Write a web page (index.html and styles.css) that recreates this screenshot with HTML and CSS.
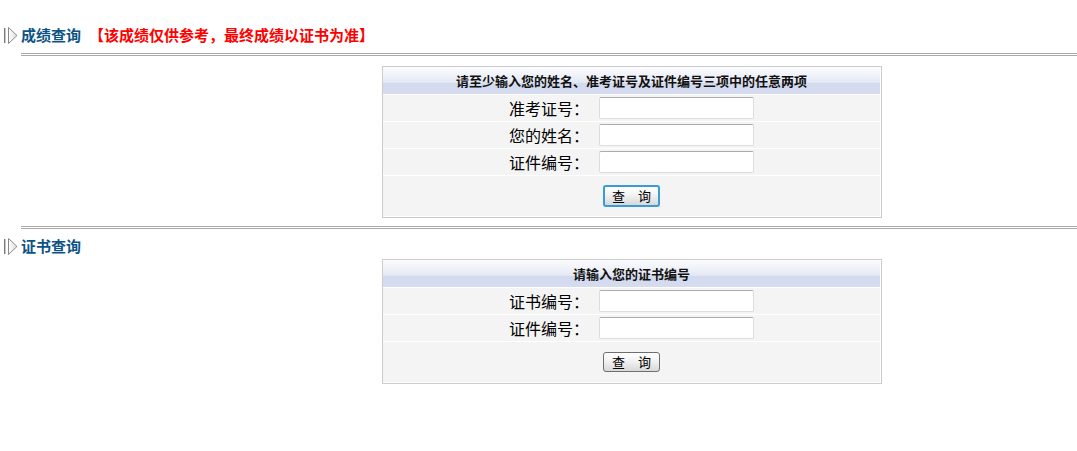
FILE: index.html
```html
<!DOCTYPE html>
<html lang="zh-CN">
<head>
<meta charset="utf-8">
<title>成绩查询</title>
<link rel="stylesheet" href="styles.css">
</head>
<body>
<div class="page">
  <div class="title first">
    <svg class="icon" width="14" height="17" viewBox="0 0 14 17">
      <defs>
        <linearGradient id="tg" x1="0" y1="0" x2="1" y2="0">
          <stop offset="0" stop-color="#ffffff"/>
          <stop offset="1" stop-color="#dcdcdc"/>
        </linearGradient>
      </defs>
      <rect x="0" y="1" width="1" height="15" fill="#7a7a7a"/>
      <rect x="1" y="1" width="1" height="15" fill="#c8c8c8"/>
      <polygon points="4.5,0.5 13,8.5 4.5,16.5" fill="url(#tg)" stroke="#888888" stroke-width="1"/>
    </svg>
    <span class="title-text">成绩查询</span>
    <span class="notice">【该成绩仅供参考，最终成绩以证书为准】</span>
  </div>
  <div class="rule first-rule"></div>

  <div class="box box-one">
    <div class="box-head">请至少输入您的姓名、准考证号及证件编号三项中的任意两项</div>
    <div class="row"><label class="lbl">准考证号：</label><input class="field" type="text"></div>
    <div class="row"><label class="lbl">您的姓名：</label><input class="field" type="text"></div>
    <div class="row"><label class="lbl">证件编号：</label><input class="field" type="text"></div>
    <div class="btn-row"><button class="btn focused" type="button">查　询</button></div>
  </div>

  <div class="rule second-rule"></div>
  <div class="title second">
    <svg class="icon" width="14" height="17" viewBox="0 0 14 17">
      <defs>
        <linearGradient id="tg2" x1="0" y1="0" x2="1" y2="0">
          <stop offset="0" stop-color="#ffffff"/>
          <stop offset="1" stop-color="#dcdcdc"/>
        </linearGradient>
      </defs>
      <rect x="0" y="1" width="1" height="15" fill="#7a7a7a"/>
      <rect x="1" y="1" width="1" height="15" fill="#c8c8c8"/>
      <polygon points="4.5,0.5 13,8.5 4.5,16.5" fill="url(#tg2)" stroke="#888888" stroke-width="1"/>
    </svg>
    <span class="title-text">证书查询</span>
  </div>

  <div class="box box-two">
    <div class="box-head">请输入您的证书编号</div>
    <div class="row"><label class="lbl">证书编号：</label><input class="field" type="text"></div>
    <div class="row"><label class="lbl">证件编号：</label><input class="field" type="text"></div>
    <div class="btn-row"><button class="btn" type="button">查　询</button></div>
  </div>
</div>
</body>
</html>
```
FILE: styles.css
```css
html, body {
  margin: 0;
  padding: 0;
  background: #ffffff;
}

body {
  font-family: "Noto Sans CJK SC", "Liberation Sans", sans-serif;
  color: #000;
}

.page {
  width: 1077px;
}

.title {
  display: flex;
  align-items: center;
  height: 18px;
  padding-left: 4px;
}

.title.first {
  margin-top: 26px;
}

.title.second {
  margin-top: 8px;
}

.icon {
  display: block;
  flex: none;
  margin-right: 3px;
}

.title-text {
  font-size: 15px;
  font-weight: bold;
  color: #0d5486;
  line-height: 18px;
}

.notice {
  margin-left: 8px;
  font-size: 15px;
  font-weight: bold;
  color: #ff0000;
  line-height: 18px;
}

.rule {
  margin-left: 21px;
  height: 3px;
  box-sizing: border-box;
  border-top: 1px solid #aaaaaa;
  border-bottom: 1px solid #aaaaaa;
}

.first-rule {
  margin-top: 9px;
}

.second-rule {
  margin-top: 8px;
}

.box {
  margin-left: 382px;
  width: 500px;
  box-sizing: border-box;
  border: 1px solid #cccccc;
  background: #ffffff;
  display: flex;
  flex-direction: column;
  gap: 1px;
  padding: 0 1px 1px 0;
}

.box-one {
  margin-top: 10px;
}

.box-two {
  margin-top: 4px;
}

.box-head {
  height: 27px;
  line-height: 28px;
  text-align: center;
  font-size: 13px;
  font-weight: bold;
  color: #111;
  background: linear-gradient(to bottom, #fbfcfe 0%, #eceff7 40%, #e3e7f3 58%, #d3daee 60%, #d6dcef 100%);
}

.row {
  height: 26px;
  display: flex;
  align-items: center;
  background: #f4f4f4;
}

.lbl {
  width: 206px;
  flex: none;
  text-align: right;
  font-size: 16px;
  line-height: 20px;
  color: #000;
}

.field {
  margin-left: 10px;
  width: 155px;
  height: 22px;
  box-sizing: border-box;
  border: 1px solid #dcdde3;
  border-top-color: #ababab;
  border-radius: 2px;
  background: #ffffff;
  padding: 0 2px;
  font-size: 13px;
  outline: none;
}

.btn-row {
  height: 40px;
  display: flex;
  align-items: center;
  justify-content: center;
  background: #f4f4f4;
}

.btn {
  width: 57px;
  height: 20px;
  box-sizing: border-box;
  padding: 0;
  border: 1px solid #6f6f6f;
  border-radius: 3px;
  background: linear-gradient(to bottom, #ffffff 0%, #f2f2f2 45%, #d8d8d8 100%);
  font-family: "Noto Sans CJK SC", sans-serif;
  font-size: 13px;
  line-height: 16px;
  color: #000;
}

.btn.focused {
  height: 22px;
  border: 2px solid #3a9bd6;
}
```
